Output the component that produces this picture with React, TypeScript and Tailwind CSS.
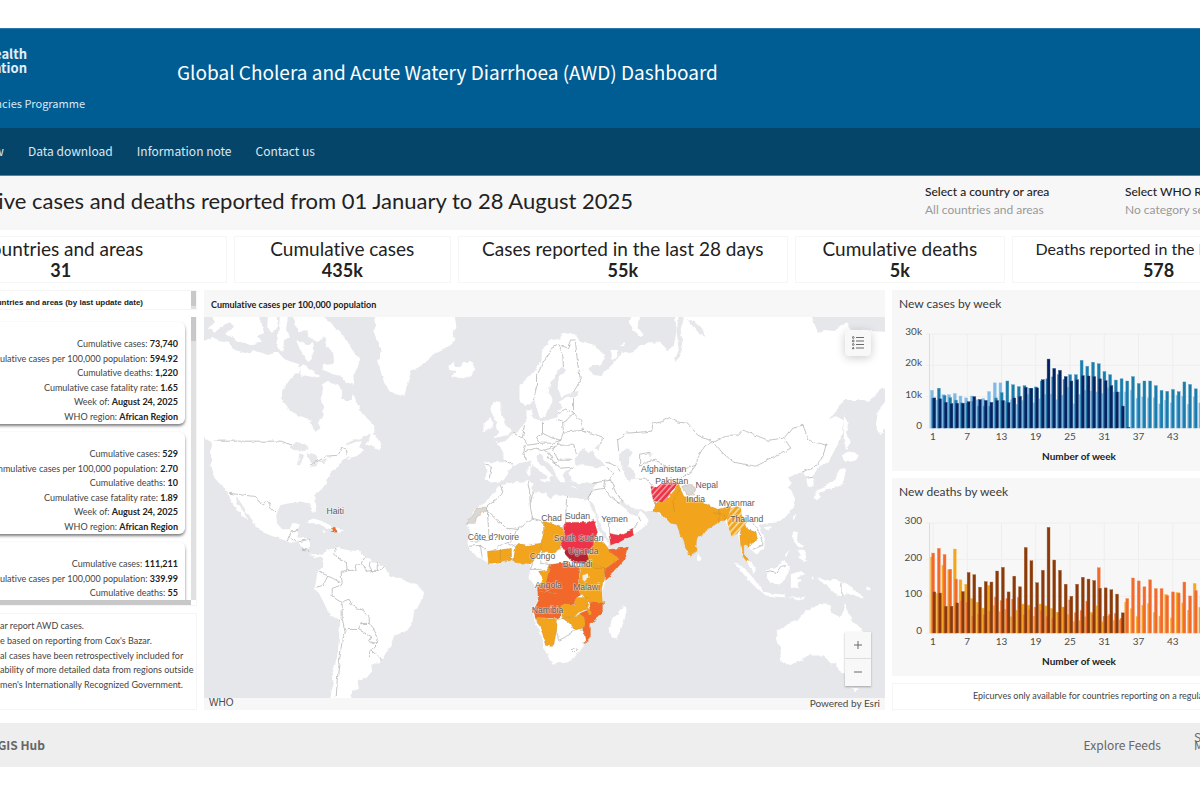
import React from "react";

const LATO = "font-['Lato','Noto_Sans',sans-serif]";
const SOURCE = "font-['Noto_Sans_CJK_SC','Noto_Sans',sans-serif]";

const kpis = [
  { label: "Countries and areas", value: "31", grow: "basis-0 grow-[332]", size: "text-[19px]" },
  { label: "Cumulative cases", value: "435k", grow: "basis-0 grow-[217]", size: "text-[19px]" },
  { label: "Cases reported in the last 28 days", value: "55k", grow: "basis-0 grow-[330]", size: "text-[19px]" },
  { label: "Cumulative deaths", value: "5k", grow: "basis-0 grow-[210]", size: "text-[19px]" },
  { label: "Deaths reported in the last 28 days", value: "578", grow: "basis-0 grow-[293]", size: "text-[16px]" },
];

const cards = [
  { cases: "73,740", rate: "594.92", deaths: "1,220", cfr: "1.65" },
  { cases: "529", rate: "2.70", deaths: "10", cfr: "1.89" },
  { cases: "111,211", rate: "339.99", deaths: "55", cfr: "0.05" },
];

const notes = [
  "ar report AWD cases.",
  "e based on reporting from Cox's Bazar.",
  "al cases have been retrospectively included for",
  "ability of more detailed data from regions outside",
  "men's Internationally Recognized Government.",
];

type Series = { color: string; edge: string; values: number[] };

const caseSeries: Series[] = [
  {
    color: "#7fb9e6",
    edge: "#8fc2e9",
    values: [12, 8.9, 10.6, 10.6, 11, 10.2, 9.6, 10.2, 9, 9.4, 11.6, 14.4, 14.4, 8.5, 9, 7.5, 8.8, 10.7, 8, 9.3, 10.7, 10.8, 9, 10.5, 13, 7.7, 10.7, 12, 11.8, 11.5, 11, 12.8, 11.5, 11.5, 11.5, 12, 9.4, 9.9, 9.6, 9.6, 7.7, 8.8, 8, 10.4, 10, 7.5, 9.9, 8, 9, 8, 9, 8],
  },
  {
    color: "#1b7cab",
    edge: "#4f9bc4",
    values: [9.5, 12.7, 10.4, 9.7, 8.9, 8, 8, 8.5, 7, 7, 7, 9.6, 11.3, 15, 13.8, 13.2, 13.5, 12.7, 13.1, 15, 15.7, 16.3, 17, 15.5, 17, 17, 21.6, 19.7, 21, 20.5, 18, 17, 15.3, 15.7, 15, 16.4, 14.2, 15, 15, 13.5, 12, 11.7, 12.3, 11.6, 14.7, 13.9, 12.5, 12, 11, 10, 9, 8],
  },
  {
    color: "#04225e",
    edge: "#26508a",
    values: [9.6, 9.3, 8.2, 7.8, 7.9, 7.9, 8.4, 10, 9.1, 8.8, 8.2, 8.8, 8.8, 8.1, 9.6, 10.1, 13, 12.7, 12.8, 15.4, 22, 19, 18.4, 16.4, 15, 15.4, 16.7, 16.6, 16.4, 15.7, 15.1, 13.5, 11.5, 7, 0.2],
  },
];

const deathSeries: Series[] = [
  {
    color: "#f3a61c",
    edge: "#f6b94f",
    values: [207, 108, 185, 172, 229, 145, 133, 94, 84, 68, 130, 75, 58, 65, 44, 62, 79, 76, 46, 79, 74, 67, 56, 71, 50, 31, 34, 44, 56, 74, 31, 46, 34, 36, 84, 66, 45, 75, 80, 56, 46, 105, 41, 110, 82, 62, 135, 70, 60, 50, 60, 50],
  },
  {
    color: "#f26a2b",
    edge: "#f58a57",
    values: [218, 231, 214, 174, 147, 88, 84, 46, 52, 50, 60, 98, 88, 94, 92, 97, 50, 65, 70, 62, 46, 40, 56, 70, 90, 55, 61, 87, 50, 178, 46, 50, 53, 40, 94, 150, 142, 126, 145, 121, 121, 102, 112, 109, 139, 101, 116, 100, 90, 90, 80, 70],
  },
  {
    color: "#8a3a0a",
    edge: "#a85e2c",
    values: [112, 109, 73, 73, 82, 113, 165, 159, 125, 140, 139, 169, 179, 112, 155, 126, 233, 197, 137, 171, 288, 199, 171, 133, 100, 133, 152, 147, 143, 122, 123, 118, 106, 55],
  },
];

const weekTicks = [1, 7, 13, 19, 25, 31, 37, 43, 49];

function WeekChart({
  name,
  series,
  max,
  ticks,
  plotHeight,
}: {
  name: string;
  series: Series[];
  max: number;
  ticks: string[];
  plotHeight: number;
}) {
  const left = 38;
  const top = 14;
  const step = 5.71;
  const base = top + plotHeight;
  return (
    <svg
      viewBox={`0 0 413 ${plotHeight + 56}`}
      className={`block w-full ${LATO}`}
      role="img"
      aria-label={name}
    >
      {ticks.map((t, i) => {
        const y = base - (plotHeight * i) / (ticks.length - 1);
        return (
          <g key={t}>
            <line x1={left - 4} x2={left + 297} y1={y} y2={y} stroke="#eeeeee" />
            <text x={30} y={y + 1} fontSize="10" textAnchor="end" fill="#4c4c4c">
              {t}
            </text>
          </g>
        );
      })}
      {weekTicks.map((w) => {
        const x = left + (w - 1) * step + 3;
        return (
          <g key={w}>
            <line x1={x} x2={x} y1={top} y2={base + 4} stroke="#eeeeee" />
            <text x={x} y={base + 12} fontSize="10" textAnchor="middle" fill="#4c4c4c">
              {w}
            </text>
          </g>
        );
      })}
      <line x1={left - 0.5} x2={left - 0.5} y1={top} y2={base} stroke="#dddddd" />
      {series.map((s, si) =>
        s.values.map((v, i) => {
          const h = (v / max) * plotHeight;
          return (
            <rect
              key={`${si}-${i}`}
              x={left + i * step + 0.5 + si * 1.2}
              y={base - h}
              width={2.9}
              height={h}
              fill={s.color}
              stroke={s.edge}
              strokeWidth="0.4"
            />
          );
        })
      )}
      <text x={187} y={base + 32} fontSize="10" fontWeight="700" textAnchor="middle" fill="#222222">
        Number of week
      </text>
    </svg>
  );
}

const LAND = [
  // North and South America
  "M204,341 L212,337 219,340 228,342 235,350 245,353 256,351 268,355 278,352 283,358 292,362 299,364 300,371 293,376 287,383 283,391 282,399 286,404 288,409 298,415 306,418 311,419 312,428 315,432 319,428 319,420 322,415 324,407 320,401 322,393 323,385 326,382 334,384 341,388 342,397 346,402 350,401 353,394 358,406 362,414 369,420 374,425 374,433 360,438 350,440 346,446 354,442 361,441 359,447 363,449 362,452 352,458 349,456 342,460 339,466 336,468 329,474 326,480 327,483 320,490 314,495 315,505 316,513 312,512 310,503 301,502 289,503 280,505 276,513 277,523 282,529 290,529 292,523 300,523 298,530 296,537 307,538 310,543 309,552 312,554 319,554 323,555 327,550 336,547 347,550 361,551 364,557 374,562 384,566 389,575 404,580 417,585 424,592 421,602 414,610 412,622 407,630 394,635 391,643 386,652 379,663 371,663 372,672 364,678 357,682 359,687 352,690 351,699 330,699 332,687 332,673 337,657 339,637 340,620 329,613 324,603 319,593 314,588 316,580 317,573 322,567 323,558 321,556 314,558 310,553 304,548 299,543 287,541 276,537 266,533 257,528 254,522 247,512 239,500 236,497 237,503 244,512 247,519 241,515 234,505 229,497 226,489 222,486 214,477 211,463 211,450 212,443 201,435 201,341Z",
  "M212,314 L214,323 209,328 215,332 224,325 230,322 234,327 226,334 238,341 250,345 262,342 258,336 264,333 262,325 258,314Z",
  "M268,314 L276,314 278,325 272,333 267,328Z M280,314 L288,314 286,330 290,338 284,340 282,353 276,345 278,335Z",
  "M292,314 L320,314 330,322 338,330 347,341 352,350 360,360 356,370 353,376 354,385 346,382 340,376 332,374 322,370 324,365 334,364 333,352 326,346 324,336 318,342 310,338 306,330 298,333 296,326Z",
  "M304,364 L311,370 320,376 312,378 306,375 301,377 300,368Z M296,340 L306,345 313,342 314,352 308,362 302,355Z",
  "M371,434 L377,437 381,444 382,448 376,449 370,446 366,444Z M347,460 L352,453 360,449 364,450 356,456Z",
  "M374,314 L376,325 373,332 377,340 381,350 378,360 380,370 384,383 391,392 404,397 407,383 412,370 419,367 426,362 434,353 447,347 455,340 452,333 456,327 454,314Z",
  "M448,365 L453,362 455,367 458,367 463,362 471,362 475,369 470,375 462,379 452,376 455,372 449,371Z",
  "M306,522 L313,518 322,521 332,526 334,529 326,528 318,523 308,523Z M337,527 L344,530 337,532Z M321,531 L326,531 323,533Z",
  // Eurasia
  "M484,462 L486,470 485,478 490,482 495,483 503,480 508,473 507,470 517,463 524,462 530,460 535,467 542,472 547,477 545,480 549,482 550,477 553,475 545,468 537,461 536,455 540,454 547,462 553,468 556,477 560,482 565,482 562,475 567,470 571,468 568,473 570,480 578,483 593,482 597,482 593,487 590,497 588,500 593,503 597,517 603,530 608,540 610,545 620,541 632,535 642,528 648,520 644,514 640,511 636,515 632,515 627,512 623,507 618,503 622,500 630,507 640,510 652,511 658,513 670,523 677,523 680,535 685,548 690,556 695,552 696,538 710,527 718,522 725,520 728,528 731,537 737,533 739,543 740,553 745,560 750,568 754,574 755,567 748,560 743,554 743,545 748,547 752,553 757,554 763,548 765,540 760,532 758,525 767,523 777,522 787,515 793,507 795,500 791,492 787,487 792,483 787,477 797,473 802,472 805,477 807,487 813,486 812,477 817,467 827,462 835,448 842,433 843,420 835,416 828,419 843,400 863,400 868,402 873,397 880,389 888,388 888,332 850,330 847,323 838,326 834,331 823,330 817,333 810,314 700,314 674,314 676,330 673,347 667,350 660,343 650,342 637,348 630,353 623,352 613,362 610,366 600,376 593,375 587,368 592,366 600,366 605,357 594,345 580,341 573,333 563,334 558,339 550,340 542,348 541,357 538,365 533,372 525,380 519,385 519,400 525,406 532,402 534,400 537,410 539,417 545,416 548,410 552,400 548,392 550,383 557,372 562,367 565,370 558,378 557,390 560,397 572,392 578,391 577,396 567,397 558,402 562,407 557,410 557,417 550,419 542,421 533,418 531,415 532,410 526,410 526,417 527,421 522,425 517,432 512,435 508,438 503,442 495,442 500,447 503,453 503,462 497,462Z",
  "M492,402 L500,403 500,410 503,418 505,425 511,430 507,435 493,438 498,432 495,427 498,422 493,417 490,408Z M483,423 L490,417 493,422 492,428 483,432Z",
  "M530,461 L533,464 531,468Z M527,466 L530,466 530,474 527,475Z M538,479 L546,479 544,483Z M570,486 L577,487 573,488Z",
  "M631,314 L639,314 637,327 643,335 640,337 632,331 629,324Z M610,350 L616,350 617,356 612,360Z M620,345 L624,342 625,346Z",
  "M843,413 L847,425 845,432 849,443 845,450 843,440Z M884,402 L877,410 875,425 880,434 888,425 888,402Z",
  "M841,455 L848,451 858,455 855,460 846,462 843,460Z M842,467 L845,470 842,483 836,487 826,489 816,494 815,491 826,485 834,480 838,470Z M814,492 L820,495 817,500 813,498Z",
  "M791,515 L795,513 793,521Z M764,527 L770,526 767,531Z M792,531 L797,532 796,540 803,547 798,547 792,540Z M796,549 L804,550 806,561 797,558 800,555Z M790,549 L783,557 784,553Z",
  "M696,553 L701,558 699,561 696,560Z M733,562 L742,566 752,577 762,590 757,589 748,580 738,568Z M758,589 L770,593 783,594 785,597 765,595Z M788,597 L800,597 806,596 798,600Z",
  "M765,570 L775,568 782,560 789,565 785,577 780,584 770,583 766,577Z M790,574 L799,571 804,573 796,577 802,580 796,582 798,588 794,587 790,588Z",
  "M817,577 L825,580 833,578 842,581 853,588 863,598 855,597 847,593 840,596 833,592 827,586 819,581Z M865,586 L871,588 866,590Z M810,574 L813,578 811,580Z",
  "M777,630 L788,623 797,620 803,612 813,607 818,603 830,605 830,612 840,617 843,607 844,602 847,612 852,620 860,628 868,640 870,655 866,668 860,676 848,675 838,670 835,662 830,663 823,655 807,655 797,662 785,664 779,660 780,650 775,638Z M850,687 L858,688 855,691Z",
  // Africa and Madagascar
  "M492,495 L497,487 500,485 513,482 527,481 532,482 531,488 533,492 545,493 550,498 555,494 565,497 578,498 588,500 590,506 595,515 598,530 607,542 608,548 627,547 625,558 613,572 605,580 602,590 603,612 590,623 590,635 585,642 578,653 567,662 553,663 548,657 543,645 538,630 533,615 533,608 538,598 536,587 528,577 530,570 528,562 515,560 510,558 497,565 488,563 475,555 468,547 467,542 470,533 467,523 473,510 483,503Z",
  "M624,605 L626,613 620,630 617,638 611,637 609,628 612,617 618,612Z",
];

const WATER =
  "M289,447 L296,442 304,443 309,449 302,450 294,450Z M299,452 L303,454 301,465 298,465Z M306,452 L315,454 318,460 312,464 308,458Z M309,467 L318,462 316,466Z M318,461 L327,459 324,463Z M574,459 L578,453 583,448 587,452 592,450 595,457 603,462 605,466 597,467 583,465 575,466Z M595,448 L600,443 598,450Z M618,453 L627,448 632,452 628,460 627,465 633,470 634,478 628,481 623,473 620,463Z M678,314 L684,314 680,330 682,345 679,358 675,362 674,360 678,350 676,332Z M686,319 L694,322 702,330 704,336 699,334 692,326Z M645,453 L652,452 650,457Z M581,574 L587,573 588,577 583,581 581,578Z M587,598 L589,603 590,609 588,607Z";

const BORDERS =
  "M214,441 L281,441 292,445 M310,465 L327,456 337,455 342,447 346,449 347,455 M229,493 L244,495 254,496 259,500 262,504 267,501 271,507 276,512 M287,540 L291,532 298,530 M291,537 L296,542 310,539 M302,549 L310,550 " +
  "M337,547 L334,553 338,558 346,561 347,570 341,573 342,583 340,586 M320,572 L329,576 340,582 M328,575 L323,585 315,587 M340,585 L332,588 332,596 338,600 342,602 349,599 352,605 362,610 369,617 369,623 361,623 358,629 347,629 345,632 342,618 342,602 M369,623 L374,630 378,637 377,643 368,641 371,636 358,629 M377,643 L371,650 369,657 M371,650 L379,657 380,661 M345,632 L342,640 340,655 338,670 337,680 336,697 M339,620 L342,618 M347,570 L356,570 355,566 361,563 364,557 M361,563 L367,571 374,570 381,570 384,566 M370,561 L369,565 372,571 M378,563 L378,570 " +
  "M533,400 L536,387 536,375 542,363 550,350 557,345 567,348 570,340 575,340 M557,345 L562,353 563,367 M575,342 L577,363 580,380 573,392 M573,397 L573,410 M557,413 L565,409 573,413 M542,422 L542,433 552,438 560,440 563,432 562,422 556,420 M563,432 L583,430 580,420 573,413 566,420 562,422 M583,430 L602,437 600,444 M560,440 L558,445 573,445 576,453 M524,425 L522,437 527,445 540,443 536,437 542,433 M513,433 L522,438 M525,445 L523,452 525,460 M503,460 L513,464 M485,465 L491,466 489,478 M523,452 L535,448 545,450 558,445 M540,443 L552,443 560,440 M545,450 L550,455 555,465 560,468 573,467 M558,445 L552,450 558,460 572,460 M547,455 L553,463 558,462 M592,483 L603,481 610,480 613,472 606,467 M610,480 L615,492 622,502 M588,500 L592,490 603,488 604,481 M603,488 L612,498 619,503 M605,462 L616,466 620,472 M618,450 L617,440 626,433 640,432 651,431 652,424 662,421 670,417 678,422 687,423 697,435 713,442 703,447 697,457 695,465 680,470 663,466 655,460 645,462 639,466 639,454 650,452 M634,478 L645,478 652,486 M652,486 L651,497 656,505 653,510 M695,465 L690,472 680,478 " +
  "M713,442 L727,435 738,435 742,430 750,433 767,440 783,438 790,448 773,457 755,466 733,462 722,453 713,442 M783,438 L792,427 802,425 808,440 825,445 822,457 813,467 802,472 M806,478 L812,477 M685,497 L700,505 715,510 M745,523 L750,520 757,530 762,540 762,545 752,549 M765,571 L775,573 780,566 787,565 M841,581 L841,596 " +
  "M500,485 L503,493 487,505 487,511 505,528 517,529 532,518 530,507 529,490 527,482 M533,492 L530,502 M532,518 L543,521 M563,528 L565,522 566,497 M487,512 L489,540 470,541 M517,529 L514,538 508,542 500,545 493,550 M508,542 L516,547 M468,546 L480,545 487,551 M480,545 L482,558 M500,549 L500,563 M511,548 L511,559 M542,552 L539,563 550,564 M532,562 L530,569 541,569 M619,521 L608,523 608,533 M632,529 L640,520 638,515 M557,619 L568,617 575,629 564,637 558,640 556,630 M573,647 L577,649 573,653 570,650Z M575,629 L583,630 M583,642 L587,641";

const COLOURED = [
  { c: "#d8d8d8", d: "M466,523 L475,523 476,517 480,516 480,512 487,511 487,507 477,507 470,517Z" },
  { c: "#d8d8d8", d: "M681,486 L690,484 695,488 692,496 685,494Z" },
  { c: "#f2a51c", d: "M543,521 L547,522 563,528 563,538 559,542 560,548 552,553 542,552 539,545 543,535Z" },
  { c: "#f2a51c", d: "M515,547 L517,543 527,545 540,543 541,550 532,562 522,565 513,560Z" },
  { c: "#f2a51c", d: "M487,551 L498,550 510,548 511,560 498,563 488,563Z" },
  { c: "#f2a51c", d: "M593,542 L602,541 607,547 609,551 619,558 605,568 595,567 587,562 588,552Z" },
  { c: "#f2a51c", d: "M579,567 L587,562 605,568 603,580 601,588 602,602 588,603 580,593 579,573Z" },
  { c: "#f2a51c", d: "M549,565 L549,575 545,585 538,586 542,577 538,571 545,570Z" },
  { c: "#f26829", d: "M550,564 L567,562 578,567 579,583 580,595 575,597 575,604 560,604 558,593 545,592 537,590 537,586 545,585 548,573Z" },
  { c: "#f26829", d: "M537,590 L545,592 558,593 562,603 559,618 535,617 533,610 538,600Z" },
  { c: "#f2a51c", d: "M535,617 L557,619 556,630 553,646 545,645 542,633Z" },
  { c: "#f2a51c", d: "M560,605 L565,603 575,605 575,597 587,597 588,608 578,612 573,617 562,618Z" },
  { c: "#f2a51c", d: "M562,618 L573,617 580,613 586,617 583,628 575,629 568,622Z" },
  { c: "#f26829", d: "M589,603 L603,601 603,612 590,623 590,636 585,642 583,630 585,618 579,613 588,609Z" },
  { c: "#f2a51c", d: "M587,598 L589,603 591,613 588,614 586,606Z" },
  { c: "#f26829", d: "M608,549 L628,547 625,558 613,572 604,580 604,569 619,558 609,552Z" },
  { c: "#ee3346", d: "M565,522 L587,522 593,519 597,532 593,542 590,552 565,552 559,543 563,536Z" },
  { c: "#b3212d", d: "M564,553 L568,548 572,552 580,551 586,548 588,560 584,563 575,563 570,560Z" },
  { c: "#ee3346", d: "M608,533 L620,535 632,529 633,535 620,541 610,545Z" },
  { c: "#f26829", d: "M332,527 L336,527 337,532 330,532 334,530Z" },
  { c: "#f2a51c", d: "M678,484 L683,496 700,502 717,509 730,506 729,512 725,521 718,522 710,527 696,538 695,552 690,556 685,548 680,535 676,524 670,523 660,513 652,511 654,502 663,502 671,492Z" },
  { c: "#f2a51c", d: "M741,525 L745,523 747,529 755,532 757,540 750,542 748,547 743,545 743,553 748,560 746,561 742,557 740,547 739,535Z" },
];

const HATCHED = [
  { c: "url(#hatchRed)", d: "M650,486 L656,487 661,483 677,482 674,488 670,492 667,498 662,502 653,501 651,494Z" },
  { c: "url(#hatchAmber)", d: "M730,508 L735,506 740,507 741,515 746,522 742,527 739,530 737,533 731,537 728,528 726,520Z" },
];

const LABELS: [string, number, number][] = [
  ["Haiti", 335, 514],
  ["Chad", 551, 521],
  ["Sudan", 577, 519],
  ["Yemen", 614, 522],
  ["South Sudan", 578, 541],
  ["Côte d?Ivoire", 493, 540],
  ["Uganda", 583, 554],
  ["Congo", 542, 559],
  ["Burundi", 577, 567],
  ["Angola", 548, 588],
  ["Malawi", 586, 590],
  ["Namibia", 547, 613],
  ["Afghanistan", 663, 472],
  ["Pakistan", 671, 484],
  ["Nepal", 706, 488],
  ["India", 695, 502],
  ["Myanmar", 736, 506],
  ["Thailand", 746, 522],
];

function WorldMap() {
  return (
    <svg
      viewBox="204 317 680 380"
      preserveAspectRatio="xMidYMid slice"
      className="block w-full font-['Liberation_Sans',Arial,sans-serif]"
      role="img"
      aria-label="Cumulative cases per 100,000 population"
    >
      <defs>
        <pattern id="hatchRed" width="4.2" height="4.2" patternUnits="userSpaceOnUse" patternTransform="rotate(42)">
          <rect width="4.2" height="4.2" fill="#ee3346" />
          <rect width="1.4" height="4.2" fill="#f6a5ad" />
        </pattern>
        <pattern id="hatchAmber" width="4.6" height="4.6" patternUnits="userSpaceOnUse" patternTransform="rotate(42)">
          <rect width="4.6" height="4.6" fill="#f2a51c" />
          <rect width="1.7" height="4.6" fill="#f9d9a0" />
        </pattern>
        <filter id="coast" filterUnits="userSpaceOnUse" x="200" y="312" width="690" height="390">
          <feTurbulence type="fractalNoise" baseFrequency="0.16" numOctaves="2" seed="4" result="noise" />
          <feDisplacementMap in="SourceGraphic" in2="noise" scale="4" xChannelSelector="R" yChannelSelector="G" />
        </filter>
      </defs>
      <rect x="200" y="312" width="690" height="390" fill="#e6e7eb" />
      <g filter="url(#coast)">
        <g fill="#ffffff">
          {LAND.map((d) => (
            <path key={d} d={d} />
          ))}
        </g>
        <path d={WATER} fill="#e6e7eb" />
        <path d={BORDERS} fill="none" stroke="#9c9c9c" strokeWidth="0.6" strokeLinejoin="round" />
        {COLOURED.map((s) => (
          <path key={s.d} d={s.d} fill={s.c} stroke="#b98a4a" strokeWidth="0.3" />
        ))}
        <path d="M582,574 L587,573 588,577 584,581 582,579Z M587,598 L589,603 590,609 588,607Z" fill="#eeeef2" />
        <path
          d="M500,549 L500,563 M605,568 L594,568 588,562 M586,583 L600,590 M680,488 L672,501 674,512 M718,509 L718,521 M712,512 L724,514 724,520"
          fill="none"
          stroke="#c08a30"
          strokeWidth="0.5"
        />
      </g>
      {HATCHED.map((s) => (
        <path key={s.d} d={s.d} fill={s.c} />
      ))}
      <g
        fontSize="8.6"
        textAnchor="middle"
        fill="#5a5a5a"
        stroke="#ffffff"
        strokeOpacity="0.55"
        strokeWidth="1.2"
        paintOrder="stroke"
      >
        {LABELS.map(([t, x, y]) => (
          <text key={t} x={x} y={y}>
            {t}
          </text>
        ))}
      </g>
    </svg>
  );
}

export default function App() {
  return (
    <div className={`min-h-screen overflow-hidden bg-white pt-7 text-[#222222] [font-variant-ligatures:none] ${LATO}`}>
      <div className="-mx-[105px]">
        <header className={`text-white ${SOURCE}`}>
          <div className="flex h-[100px] border-t border-[#2a77a8] bg-[#005d94]">
            <div className="flex w-[282px] shrink-0 flex-col items-end pt-[18px]">
              <p className="mr-[150px] text-right text-[13px] leading-[14px] font-bold whitespace-nowrap text-[#e3eff6]">
                World Health
                <br />
                Organization
              </p>
              <p className="mt-5 mr-[92px] text-[11px] leading-4 whitespace-nowrap text-[#d9e8f2]">
                WHO Health Emergencies Programme
              </p>
            </div>
            <h1 className="pt-[31px] text-[19px] leading-6 whitespace-nowrap">
              Global Cholera and Acute Watery Diarrhoea (AWD) Dashboard
            </h1>
          </div>
          <nav className="flex h-12 items-center gap-6 border-b border-[#5d7fa5] bg-[#05456a] pb-0.5 text-[12px] whitespace-nowrap text-[#dde7ee]">
            <a href="#overview" className="w-[109px] text-right">Overview</a>
            <a href="#download">Data download</a>
            <a href="#note">Information note</a>
            <a href="#contact">Contact us</a>
          </nav>
        </header>

        <section className="flex h-[54px] items-center bg-[#f7f7f7] pb-1">
          <h2 className="w-[738px] shrink-0 text-right text-[22px] leading-7 whitespace-nowrap">
            Cumulative cases and deaths reported from 01 January to 28 August 2025
          </h2>
          <div className="ml-auto flex w-[380px] text-[12px]">
            <label className="w-[200px] font-medium">
              <span className="block leading-[18px]">Select a country or area</span>
              <select className="block w-full appearance-none bg-transparent leading-[18px] font-normal text-[#999999]">
                <option>All countries and areas</option>
              </select>
            </label>
            <label className="w-[180px] font-medium">
              <span className="block leading-[18px]">Select WHO Region</span>
              <select className="block w-full appearance-none bg-transparent leading-[18px] font-normal text-[#999999]">
                <option>No category selected</option>
              </select>
            </label>
          </div>
        </section>

        <section className="mt-1.5 flex gap-[7px]">
          {kpis.map((k) => (
            <div
              key={k.label}
              className={`flex h-[47px] min-w-0 flex-col items-center justify-center gap-0.5 border border-[#f6f6f6] whitespace-nowrap ${k.grow}`}
            >
              <span className={`leading-[19px] ${k.size}`}>{k.label}</span>
              <strong className="text-[18px] leading-[21px]">{k.value}</strong>
            </div>
          ))}
        </section>

        <main className="mt-[7px] grid grid-cols-[302fr_681fr_413fr] gap-[7px]">
          <div className="flex min-w-0 flex-col gap-[7px]">
            <div className="flex h-5 border border-[#f5f5f5]">
              <h3 className="flex-1 pt-1.5 pr-12 text-right font-['Liberation_Sans',Arial,sans-serif] text-[8px] leading-3 font-bold whitespace-nowrap">
                Affected countries and areas (by last update date)
              </h3>
              <div className="w-[5px] bg-[#e0e0e0]">
                <div className="h-[15px] bg-[#c8c8c8]" />
              </div>
            </div>

            <div className="flex h-[289px] border border-t-0 border-[#f5f5f5]">
              <div className="flex flex-1 flex-col">
                <div className="flex flex-1 flex-col gap-2 overflow-hidden pt-[5px] pr-1.5">
                  {cards.map((c) => (
                    <article
                      key={c.cases}
                      className="flex h-[102px] shrink-0 flex-col justify-end rounded-md bg-white pr-[7px] shadow-[0_2px_3px_rgba(0,0,0,0.5)]"
                    >
                      <div className="flex h-[87px] flex-col justify-between text-right text-[9px] leading-[14px] whitespace-nowrap text-[#444444]">
                        <p>Cumulative cases: <b className="text-[#222222]">{c.cases}</b></p>
                        <p>Cummulative cases per 100,000 population: <b className="text-[#222222]">{c.rate}</b></p>
                        <p>Cumulative deaths: <b className="text-[#222222]">{c.deaths}</b></p>
                        <p>Cumulative case fatality rate: <b className="text-[#222222]">{c.cfr}</b></p>
                        <p>Week of: <b className="text-[#222222]">August 24, 2025</b></p>
                        <p>WHO region: <b className="text-[#222222]">African Region</b></p>
                      </div>
                    </article>
                  ))}
                </div>
                <div className="h-[5px] shrink-0 bg-[#c8c8c8]" />
              </div>
              <div className="mb-[5px] w-[5px] bg-[#e0e0e0]">
                <div className="h-6 bg-[#c8c8c8]" />
              </div>
            </div>

            <div className="flex h-[97px] flex-col border border-[#f5f5f5] pt-[5px] pl-[104px]">
              <div className="flex h-[73px] flex-col justify-between text-[9px] leading-[14px] whitespace-nowrap text-[#444444]">
                {notes.map((n) => (
                  <p key={n}>{n}</p>
                ))}
              </div>
            </div>
          </div>

          <section className="min-w-0 bg-[#f7f7f7]">
            <h3 className="px-[7px] pt-[7px] pb-1 text-[9px] leading-4 font-bold">
              Cumulative cases per 100,000 population
            </h3>
            <div className="relative">
              <WorldMap />
              <button
                type="button"
                aria-label="Legend"
                className="absolute top-[13px] right-3.5 flex size-[26px] items-center justify-center rounded-sm bg-[#f8f8f8] shadow-[0_2px_10px_rgba(0,0,0,0.2)]"
              >
                <svg viewBox="0 0 12 14" className="h-3.5 w-3" fill="none" stroke="#6a6a6a" strokeWidth="1">
                  <path d="M4 1.5H12M4 5H12M4 8.5H12M4 12H12" />
                  <circle cx="1.2" cy="1.5" r="0.9" />
                  <circle cx="1.2" cy="5" r="0.9" />
                  <circle cx="1.2" cy="8.5" r="0.9" />
                  <path d="M0.4 12.7L1.2 11.2L2 12.7Z" />
                </svg>
              </button>
              <div className="absolute right-3.5 bottom-3 w-[26px] divide-y divide-[#dddddd] bg-[#f8f8f8] shadow-[0_1px_2px_rgba(0,0,0,0.3)]">
                <button type="button" aria-label="Zoom in" className="flex h-[27px] w-full items-center justify-center">
                  <svg viewBox="0 0 8 8" className="size-2" stroke="#6a6a6a" strokeWidth="1">
                    <path d="M4 0V8M0 4H8" />
                  </svg>
                </button>
                <button type="button" aria-label="Zoom out" className="flex h-[27px] w-full items-center justify-center">
                  <svg viewBox="0 0 8 8" className="size-2" stroke="#6a6a6a" strokeWidth="1">
                    <path d="M0 4H8" />
                  </svg>
                </button>
              </div>
            </div>
            <div className="flex justify-between px-[5px] text-[10px] leading-[10px] text-[#4a4a4a]">
              <span className="font-['Liberation_Sans',Arial,sans-serif]">WHO</span>
              <a href="#esri">Powered by Esri</a>
            </div>
          </section>

          <div className="flex min-w-0 flex-col gap-[7px]">
            <section className="h-[181px] bg-[#f7f7f7]">
              <h3 className="px-[7px] pt-1.5 text-[12px] leading-4 text-[#3a3a3a]">New cases by week</h3>
              <div className="pt-2">
                <WeekChart name="New cases by week" series={caseSeries} max={30} ticks={["0", "10k", "20k", "30k"]} plotHeight={94} />
              </div>
            </section>
            <section className="h-[198px] bg-[#f7f7f7]">
              <h3 className="px-[7px] pt-1.5 text-[12px] leading-4 text-[#3a3a3a]">New deaths by week</h3>
              <div className="pt-[9px]">
                <WeekChart name="New deaths by week" series={deathSeries} max={300} ticks={["0", "100", "200", "300"]} plotHeight={110} />
              </div>
            </section>
            <p className="h-[27px] border border-[#f5f5f5] pl-20 text-[9px] leading-[24px] whitespace-nowrap text-[#444444]">
              Epicurves only available for countries reporting on a regular basis
            </p>
          </div>
        </main>

        <footer className={`mt-[13px] flex h-11 items-center bg-[#eeeeee] text-[12px] text-[#666666] ${SOURCE}`}>
          <a href="#hub" className="w-[150px] text-right font-bold">ArcGIS Hub</a>
          <a href="#feeds" className="ml-auto">Explore Feeds</a>
          <a href="#map" className="mb-2 ml-[33px] w-[111px] leading-2">
            Site
            <br />
            Map
          </a>
        </footer>
      </div>
    </div>
  );
}
